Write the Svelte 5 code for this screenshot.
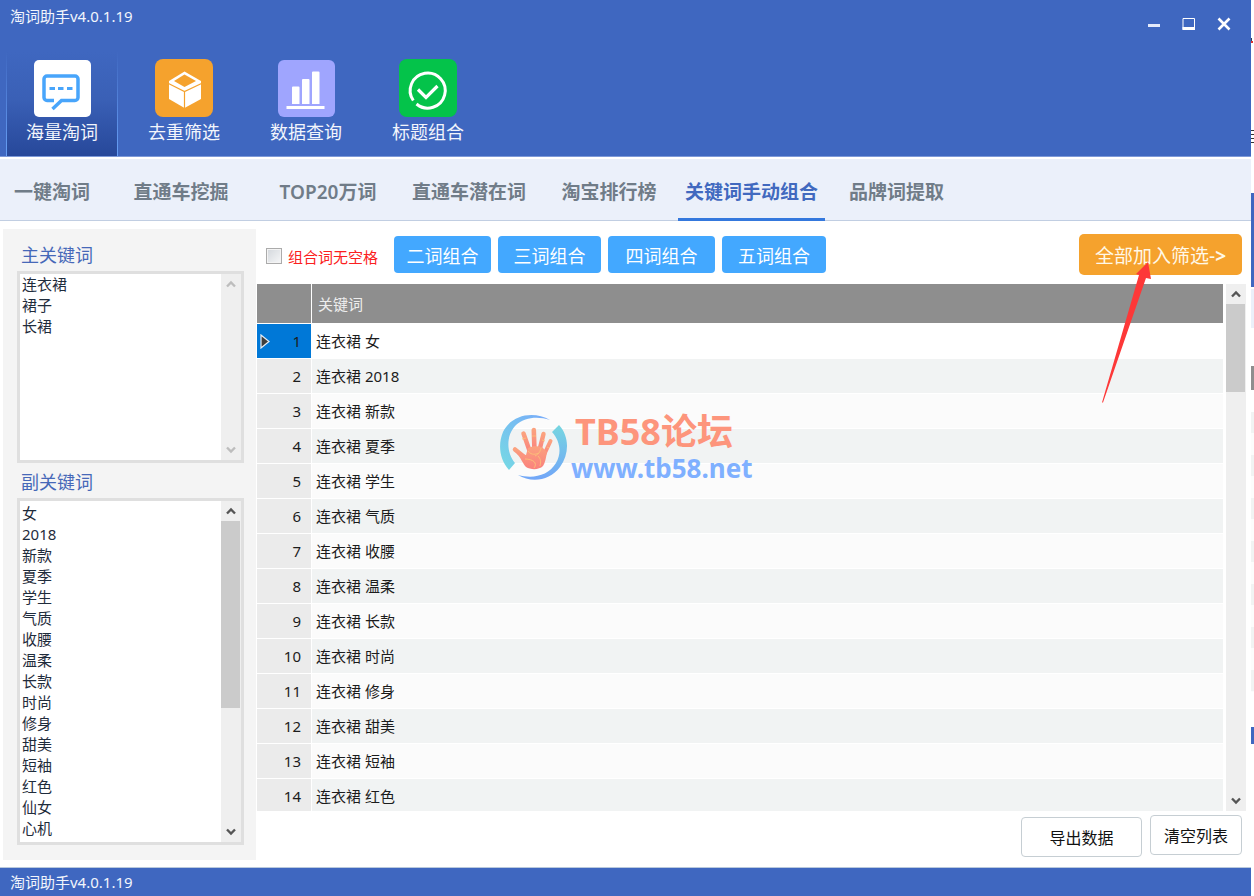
<script lang="ts">
  const version = '淘词助手v4.0.1.19';

  const tools = [
    { id: 'mine', label: '海量淘词' },
    { id: 'filter', label: '去重筛选' },
    { id: 'data', label: '数据查询' },
    { id: 'title', label: '标题组合' }
  ];

  const tabs = [
    '一键淘词',
    '直通车挖掘',
    'TOP20万词',
    '直通车潜在词',
    '淘宝排行榜',
    '关键词手动组合',
    '品牌词提取'
  ];

  const combos = ['二词组合', '三词组合', '四词组合', '五词组合'];

  const words = [
    '女', '2018', '新款', '夏季', '学生', '气质', '收腰', '温柔',
    '长款', '时尚', '修身', '甜美', '短袖', '红色', '仙女', '心机'
  ];

  let activeTool = $state('mine');
  let activeTab = $state('关键词手动组合');
  let selectedRow = $state(0);
  let noSpace = $state(false);
  let mainWords = $state('连衣裙\n裙子\n长裙');
  let subWords = $state(words.join('\n'));

  let rows = $derived(words.slice(0, 14).map((word) => `连衣裙 ${word}`));
</script>

{#snippet chevron(up: boolean)}
  <svg width="10" height="8" viewBox="0 0 10 8" aria-hidden="true">
    <path d={up ? 'M1 6.5 5 2.5 9 6.5' : 'M1 1.5 5 5.5 9 1.5'} fill="none" stroke="currentColor" stroke-width="2.4" />
  </svg>
{/snippet}

{#snippet scrollbar(thumb: number)}
  <div class="scrollbar" class:disabled={thumb === 0}>
    <button class="scroll-btn" aria-label="向上" disabled={thumb === 0}>{@render chevron(true)}</button>
    <div class="track">
      {#if thumb > 0}
        <div class="thumb" style="height: {thumb}%"></div>
      {/if}
    </div>
    <button class="scroll-btn" aria-label="向下" disabled={thumb === 0}>{@render chevron(false)}</button>
  </div>
{/snippet}

<div class="desktop">
  <div class="window">
    <header class="header">
      <div class="titlebar">
        <span class="caption">{version}</span>
        <div class="window-controls">
          <button aria-label="最小化">
            <svg width="14" height="14" viewBox="0 0 14 14"><path d="M1 8.500h12" stroke="#e4eafa" stroke-width="3" /></svg>
          </button>
          <button aria-label="最大化">
            <svg width="14" height="14" viewBox="0 0 14 14">
              <path d="M1 1.500h11.500v11H1z" fill="none" stroke="#fff" />
              <path d="M.5 11.500h12.500" stroke="#fff" stroke-width="3" />
            </svg>
          </button>
          <button aria-label="关闭">
            <svg width="14" height="14" viewBox="0 0 14 14"><path d="M1.500 1.500l11 11M12.500 1.500l-11 11" stroke="#fff" stroke-width="2.600" /></svg>
          </button>
        </div>
      </div>

      <nav class="tools">
        {#each tools as tool}
          <button class="tool" class:active={activeTool === tool.id} onclick={() => (activeTool = tool.id)}>
            <svg width="58" height="58" viewBox="0 0 58 58" aria-hidden="true">
              {#if tool.id === 'mine'}
                <rect x="1" y="1" width="57" height="57" rx="5" fill="#fff" />
                <path d="M21 41.500h-7a3 3 0 0 1-3-3V20a3 3 0 0 1 3-3h28a3 3 0 0 1 3 3v18.500a3 3 0 0 1-3 3H28.500l-9 8.500" fill="none" stroke="#48a5fb" stroke-width="3.500" />
                <path d="M16.500 29.500H22M25 29.500h5.500M34 29.500h5.500" stroke="#48a5fb" stroke-width="3.200" />
              {:else if tool.id === 'filter'}
                <rect width="58" height="58" rx="8" fill="#f5a22d" />
                <path d="M14 22 29.500 12.500 46 22V40L29.500 49 14 40z" fill="#fff" />
                <path d="M19 22 29.500 15.500 41 22 29.500 28z" fill="#f5a22d" />
                <path d="M13.500 24.500 29.500 32.500 46.500 24.500M29.500 32v17" fill="none" stroke="#f5a22d" stroke-width="1.200" />
              {:else if tool.id === 'data'}
                <rect x="1" y="1" width="57" height="57" rx="6" fill="#9fa5fe" />
                <path d="M15 28.500a1 1 0 0 1 1-1h5.500a1 1 0 0 1 1 1V45H15zM25 21a1 1 0 0 1 1-1h5.500a1 1 0 0 1 1 1v24H25zM35 13.500a1 1 0 0 1 1-1h5.500a1 1 0 0 1 1 1V45H35z" fill="#fff" />
                <path d="M9.500 48.500h38" stroke="#fff" stroke-width="2.800" />
              {:else}
                <rect width="58" height="58" rx="8" fill="#04c34a" />
                <path d="M14.300 41.500A17.500 17.500 0 1 1 17.500 45" fill="none" stroke="#fff" stroke-width="3" />
                <path d="M19 30.500l8 8L38.500 27" fill="none" stroke="#fff" stroke-width="3.200" />
              {/if}
            </svg>
            <span>{tool.label}</span>
          </button>
        {/each}
      </nav>
    </header>

    <nav class="tabs">
      {#each tabs as tab}
        <button class="tab" class:active={activeTab === tab} onclick={() => (activeTab = tab)}>{tab}</button>
      {/each}
    </nav>

    <div class="workspace">
      <aside class="sidebar">
        <label for="main-words">主关键词</label>
        <div class="wordbox main-box">
          <textarea id="main-words" bind:value={mainWords} spellcheck="false"></textarea>
          {@render scrollbar(0)}
        </div>
        <label for="sub-words">副关键词</label>
        <div class="wordbox sub-box">
          <textarea id="sub-words" bind:value={subWords} spellcheck="false"></textarea>
          {@render scrollbar(62)}
        </div>
      </aside>

      <main class="content">
        <div class="actions">
          <label class="no-space">
            <input type="checkbox" bind:checked={noSpace} />
            组合词无空格
          </label>
          <div class="combos">
            {#each combos as combo}
              <button class="combo">{combo}</button>
            {/each}
          </div>
          <button class="add-all">全部加入筛选-<b>&gt;</b></button>
        </div>

        <div class="grid">
          <div class="grid-view">
            <table>
              <thead>
                <tr>
                  <th class="index"></th>
                  <th>关键词</th>
                </tr>
              </thead>
              <tbody>
                {#each rows as row, i}
                  <tr class:selected={selectedRow === i} onclick={() => (selectedRow = i)}>
                    <td class="index">
                      <div class="index-cell">
                        {#if selectedRow === i}
                          <svg width="10" height="15" viewBox="0 0 10 15" aria-hidden="true">
                            <path d="M1 1v13l8-6.500z" fill="#3d3d3d" stroke="#e8eef5" stroke-width="1.200" />
                          </svg>
                        {/if}
                        <span>{i + 1}</span>
                      </div>
                    </td>
                    <td>{row}</td>
                  </tr>
                {/each}
              </tbody>
            </table>
          </div>
          {@render scrollbar(18)}
        </div>

        <div class="bottom">
          <button class="plain export">导出数据</button>
          <button class="plain clear">清空列表</button>
        </div>
      </main>
    </div>

    <footer class="statusbar">{version}</footer>
  </div>

  <!-- edge of the windows lying behind this one -->
  <div class="behind"></div>

  <div class="watermark">
    <svg width="68" height="66" viewBox="0 0 68 66" aria-hidden="true">
      <defs>
        <linearGradient id="ring-left" x1="0" y1="1" x2="1" y2="0">
          <stop offset="0" stop-color="#76dbe3" />
          <stop offset="1" stop-color="#78a9fb" />
        </linearGradient>
        <linearGradient id="ring-right" x1="0" y1="0" x2="0" y2="1">
          <stop offset="0" stop-color="#76d6e0" />
          <stop offset="1" stop-color="#72a6f8" />
        </linearGradient>
        <linearGradient id="palm" x1="0" y1="0" x2="0" y2="1">
          <stop offset="0" stop-color="#fba27f" />
          <stop offset="1" stop-color="#fa817d" />
        </linearGradient>
      </defs>
      <path d="M50 6C34-3 12 0 3 18c-5 12-4 27 6 38l6-7C6 38 6 21 16 11 25 3 38 2 50 6z" fill="url(#ring-left)" />
      <path d="M59 11l-7 7c8 9 10 21 4 31-8 13-23 16-38 12 13 8 32 6 42-8 10-14 9-31-1-42z" fill="url(#ring-right)" />
      <g fill="none" stroke="url(#palm)" stroke-linecap="round">
        <path d="M28 46 15 35.500" stroke-width="4.500" />
        <path d="M30 38 23.500 19.500" stroke-width="4.500" />
        <path d="M34.500 37 33.800 16" stroke-width="4.600" />
        <path d="M39 38 43.500 20" stroke-width="4.400" />
        <path d="M43 43 50.500 27" stroke-width="4" />
      </g>
      <path d="M28 34c4-2 10-2 14-1l5 5c-1 6-2 11-4 14-4 4-12 4-17 1-3-3-5-9-9-13l9 1z" fill="url(#palm)" />
      <path d="M25 45c8 0 13 4 9 9M28 37c4 5 8 3 11 2M35 42c4-2 5-4 6-8M38 42c3 3 3 6 2 10M22 25l4-1M32 22h4M42 26l3 1M47 33l2 1" fill="none" stroke="#fbc178" stroke-width=".9" />
    </svg>
    <div class="watermark-text">
      <span class="forum">TB58论坛</span>
      <span class="site">www.tb58.net</span>
    </div>
  </div>

  <svg class="pointer" width="54" height="142" viewBox="0 0 54 142" aria-hidden="true">
    <path d="M48 0 51 17 46 16 3 140.500 2 140.500 39 13 36 12z" fill="#fd3838" />
  </svg>
</div>

<style>
  :global(body) {
    background: #fff;
  }

  .desktop {
    position: relative;
    display: grid;
    grid-template-columns: minmax(0, 1fr) 3px;
    height: 100vh;
    font-family: 'Noto Sans', 'Noto Sans CJK SC', sans-serif;
    font-size: 15px;
    color: #1c1c1c;
  }

  button {
    padding: 0;
    border: 0;
    background: none;
    font: inherit;
    color: inherit;
    cursor: pointer;
  }

  .window {
    display: flex;
    flex-direction: column;
    min-height: 0;
    background: #fff;
  }

  /* Header */
  .header {
    background: #3f67c0;
    border-bottom: 1px solid #7d99d8;
    color: #f2f5fc;
  }

  .titlebar {
    display: flex;
    justify-content: space-between;
    height: 52px;
    padding: 0 20px 0 10px;
  }

  .caption {
    line-height: 32px;
  }

  .window-controls {
    display: flex;
    align-items: center;
    gap: 21px;
    height: 48px;
  }

  .window-controls button {
    display: flex;
  }

  .tools {
    display: flex;
    gap: 10px;
    padding-left: 6px;
  }

  .tool {
    display: flex;
    flex-direction: column;
    align-items: center;
    width: 112px;
    height: 104px;
    padding-top: 7px;
    box-sizing: border-box;
    border: 1px solid transparent;
    border-width: 0 1px;
    font-size: 18px;
    line-height: 30px;
  }

  .tool.active {
    background: linear-gradient(#3f67c0, #3a60b6 45%, #27489a);
    border-image: linear-gradient(#3f67c0, #68a0f6) 1;
    border-width: 0 1px;
  }

  /* Tabs */
  .tabs {
    display: grid;
    grid-template-columns: 104px 154px 140px 142px 138px 147px 143px;
    height: 61px;
    border-top: 2px solid #fff;
    border-bottom: 1px solid #c1cee2;
    background: #ebf0fa;
  }

  .tab {
    height: 62px;
    padding-top: 4px;
    box-sizing: border-box;
    border-bottom: 3px solid transparent;
    font-size: 19px;
    font-weight: 600;
    color: #707c88;
  }

  .tab.active {
    border-bottom-color: #3478dd;
    color: #4169bf;
  }

  .workspace {
    display: flex;
    flex: 1;
    min-height: 0;
  }

  /* Keyword boxes */
  .sidebar {
    display: flex;
    flex-direction: column;
    width: 253px;
    margin: 8px 0 7px 3px;
    padding: 12px 12px 15px 14px;
    box-sizing: border-box;
    background: #f4f4f4;
  }

  .sidebar label {
    padding: 0 4px;
    font-size: 18px;
    line-height: 28px;
    color: #4668b8;
  }

  .wordbox {
    display: flex;
    min-height: 0;
    margin: 2px 0 5px;
    border: 3px solid #dfdfdf;
    background: #fff;
  }

  .main-box {
    flex: 185;
  }

  .sub-box {
    flex: 340;
    margin-bottom: 0;
  }

  textarea {
    flex: 1;
    min-width: 0;
    padding: 0 2px;
    border: 0;
    outline: 0;
    resize: none;
    overflow: hidden;
    background: #fff;
    font: inherit;
    line-height: 21px;
    color: #1f2c3c;
  }

  .sub-box textarea {
    padding-top: 2px;
  }

  .scrollbar {
    display: flex;
    flex-direction: column;
    width: 20px;
    background: #efefef;
    color: #555;
  }

  .scrollbar.disabled {
    color: #bdbdbd;
  }

  .scroll-btn {
    display: flex;
    align-items: center;
    justify-content: center;
    height: 20px;
  }

  .track {
    flex: 1;
    min-height: 0;
  }

  .thumb {
    width: 19px;
    background: #cbcbcb;
  }

  /* Content */
  .content {
    display: flex;
    flex: 1;
    flex-direction: column;
    min-width: 0;
  }

  .actions {
    display: flex;
    align-items: center;
    height: 63px;
    padding: 4px 9px 0 10px;
    box-sizing: border-box;
  }

  .no-space {
    display: flex;
    align-items: center;
    gap: 6px;
    width: 128px;
    padding-top: 3px;
    white-space: nowrap;
    color: #fb2020;
  }

  .no-space input {
    appearance: none;
    width: 16px;
    height: 16px;
    margin: 0;
    border: 1px solid #ababab;
    background: linear-gradient(135deg, #d3d7dc, #f6f7f8);
    box-shadow: inset 0 0 0 1px #f4f4f4;
  }

  .no-space input:checked {
    background: #3f67c0;
  }

  .combos {
    display: grid;
    grid-template-columns: 97px 103px 107px 104px;
    gap: 7px;
  }

  .combo {
    height: 37px;
    border-radius: 4px;
    background: #43a8ff;
    font-size: 18px;
    color: #fff;
  }

  .add-all {
    width: 163px;
    height: 41px;
    margin-left: auto;
    border-radius: 5px;
    background: #f5a22d;
    font-size: 19px;
    color: #fff8e8;
  }

  .grid {
    display: flex;
    flex: 1;
    gap: 3px;
    min-height: 0;
    padding: 0 5px 0 1px;
  }

  .grid-view {
    flex: 1;
    overflow: hidden;
  }

  table {
    width: 100%;
    border-collapse: collapse;
    table-layout: fixed;
  }

  th,
  td {
    height: 34px;
    padding: 0 4px;
    border-bottom: 1px solid #fff;
    text-align: left;
    font-weight: 400;
    line-height: 20px;
  }

  th {
    height: 39px;
    padding: 0 6px;
    background: #8e8e8e;
    color: #ededed;
  }

  td {
    background: #fbfbfb;
  }

  tbody tr:nth-child(even) td {
    background: #f1f3f3;
  }

  .index {
    width: 54px;
    padding: 0;
    border-right: 1px solid #fff;
  }

  tbody tr td.index {
    background: #ebebeb;
  }

  tbody tr.selected td {
    background: #fff;
  }

  tbody tr.selected td.index {
    background: #0078d7;
  }

  .index-cell {
    display: flex;
    align-items: center;
    padding: 0 10px 0 3px;
  }

  .index-cell span {
    margin-left: auto;
  }

  .bottom {
    display: flex;
    justify-content: flex-end;
    gap: 8px;
    height: 56px;
    padding: 4px 9px 0 0;
    box-sizing: border-box;
  }

  .plain {
    height: 40px;
    border: 1px solid #c6ced3;
    border-radius: 4px;
    background: #fff;
    font-size: 16px;
    color: #111;
  }

  .export {
    width: 121px;
    margin-top: 2px;
  }

  .clear {
    width: 92px;
  }

  .statusbar {
    border-top: 1px solid #b9c9dd;
    padding-left: 10px;
    background: #3f67c0;
    line-height: 28px;
    color: #f2f5fc;
  }

  /* Slivers of other windows */
  .behind {
    background:
      linear-gradient(#d33 0 0) 0 41px / 2px 2px no-repeat,
      linear-gradient(#345 0 0) 0 38px / 1px 3px no-repeat,
      repeating-linear-gradient(#333 0 1px, #fff 1px 4px) 0 130px / 3px 14px no-repeat,
      linear-gradient(#3f67c0 0 0) 0 193px / 3px 94px no-repeat,
      linear-gradient(#ebf0fa 0 0) 0 289px / 3px 39px no-repeat,
      linear-gradient(#8e8e8e 0 0) 0 366px / 3px 24px no-repeat,
      repeating-linear-gradient(#f1f3f3 0 21px, #fcfcfc 21px 43px) 0 412px / 3px 280px no-repeat,
      linear-gradient(#3f67c0 0 0) 0 727px / 3px 17px no-repeat,
      #fff;
  }

  /* Marks laid over the window */
  .watermark {
    position: absolute;
    left: 500px;
    top: 414px;
    display: flex;
    gap: 3px;
    pointer-events: none;
  }

  .watermark-text {
    display: flex;
    flex-direction: column;
    font-weight: 700;
    white-space: nowrap;
  }

  .forum {
    padding-left: 4px;
    font-size: 36px;
    line-height: 36px;
    color: #fd957c;
  }

  .site {
    font-size: 26px;
    line-height: 36px;
    color: #7fb0ff;
  }

  .pointer {
    position: absolute;
    left: 1100px;
    top: 262px;
    pointer-events: none;
  }
</style>
